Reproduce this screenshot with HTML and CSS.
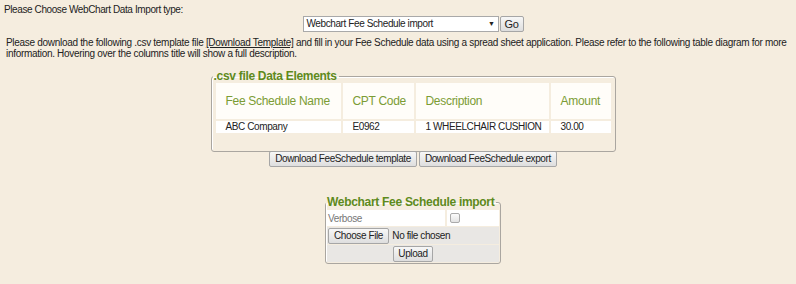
FILE: index.html
```
<!DOCTYPE html>
<html>
	<head>
		<link rel="stylesheet" href="styles.css">
	</head>
	<body>
		<div class="prompt">Please Choose WebChart Data Import type:</div>
		<div class="center">
			<form class="chooser">
				<div class="select">
					<span>Webchart Fee Schedule import</span>
					<span class="arrow">&#9660;</span>
				</div>
				<button class="btn go" type="button">Go</button>
			</form>
		</div>
		<p class="info">
			<span>Please download the following .csv template file</span> <a href="#">[Download Template]</a> <span>and fill in your Fee Schedule data using a spread sheet application. Please refer to the following table diagram for more</span><br>
			<span>information. Hovering over the columns title will show a full description.</span>
		</p>
		<div class="center">
			<fieldset class="elements">
				<legend>.csv file Data Elements</legend>
				<table class="diagram">
					<tr>
						<th class="c1">Fee Schedule Name</th>
						<th class="c2">CPT Code</th>
						<th class="c3">Description</th>
						<th class="c4">Amount</th>
					</tr>
					<tr>
						<td>ABC Company</td>
						<td>E0962</td>
						<td>1 WHEELCHAIR CUSHION</td>
						<td>30.00</td>
					</tr>
				</table>
			</fieldset>
			<div class="downloads">
				<button class="btn" type="button">Download FeeSchedule template</button>
				<button class="btn" type="button">Download FeeSchedule export</button>
			</div>
			<fieldset class="import">
				<legend>Webchart Fee Schedule import</legend>
				<table class="upload">
					<tr class="plain">
						<td class="label">Verbose</td>
						<td class="check"><span class="box"></span></td>
					</tr>
					<tr class="grey">
						<td colspan="2" class="file">
							<button class="btn" type="button">Choose File</button>
							<span>No file chosen</span>
						</td>
					</tr>
					<tr class="grey">
						<td colspan="2" class="send">
							<button class="btn" type="button">Upload</button>
						</td>
					</tr>
				</table>
			</fieldset>
		</div>
	</body>
</html>
```
FILE: styles.css
```
body {
	margin: 0;
	padding: 4px 4px 0;
	background: #f5eddf;
	font-family: "Liberation Sans", Arial, sans-serif;
	font-size: 10px;
	letter-spacing: -0.4px;
	color: #222;
}
.prompt {
	line-height: 12px;
}
.center {
	display: flex;
	flex-direction: column;
	align-items: center;
	padding-left: 30px;
}
.chooser {
	display: flex;
	gap: 1px;
	margin: 0;
}
.select {
	width: 188px;
	height: 14px;
	padding: 0 3px;
	border: 1px solid #a9a9a9;
	background: white;
	display: flex;
	justify-content: space-between;
	align-items: center;
	line-height: 14px;
}
.arrow {
	font-size: 7px;
	color: #222;
}
.btn {
	font-family: inherit;
	font-size: 10px;
	letter-spacing: -0.4px;
	color: #222;
	height: 16px;
	padding: 0 5px;
	border: 1px solid #a6a6a6;
	border-radius: 2px;
	background: linear-gradient(#f7f7f7, #dedede);
	line-height: 14px;
}
.go {
	width: 24px;
	padding: 0;
	font-size: 11px;
}
.info {
	margin: 5px 0 0 2px;
	line-height: 11px;
	letter-spacing: -0.3px;
	white-space: nowrap;
}
.info a {
	color: #222;
}
.elements {
	margin: 12px 0 0;
	padding: 0 2px 16px;
	border: 1px solid #aaa6a0;
	border-radius: 3px;
	box-shadow: inset 1px 1px 0 #fff;
}
legend {
	padding: 0 2px 0 1px;
	margin-left: -1px;
	font-size: 12px;
	letter-spacing: -0.3px;
	font-weight: bold;
	color: #5e8a1c;
	line-height: 10px;
}
.diagram {
	border-spacing: 2px;
	table-layout: fixed;
	width: 399px;
}
.diagram th {
	background: #fffdf9;
	color: #7b9c34;
	font-weight: normal;
	font-size: 12px;
	letter-spacing: -0.3px;
	text-align: left;
	padding: 10px 10px;
	line-height: 16px;
	white-space: nowrap;
}
.diagram td {
	background: #fff;
	padding: 0 10px;
	line-height: 12px;
	white-space: nowrap;
}
.c1 { width: 105px; }
.c2 { width: 51px; }
.c3 { width: 113px; }
.c4 { width: 40px; }
.downloads {
	display: flex;
	gap: 2px;
	margin-top: -1px;
}
.import {
	margin: 30px 0 0;
	padding: 2px 1px 0;
	border: 1px solid #aaa6a0;
	border-radius: 3px;
	box-shadow: inset 1px 1px 0 #fff;
}
.upload {
	border-spacing: 0 1px;
	width: 172px;
}
.upload td {
	padding: 0 1px;
	height: 16px;
}
.plain td {
	background: #fff;
}
.label {
	width: 116px;
	color: #777;
	border-right: 2px solid #f5eddf;
}
.check {
	padding-left: 3px !important;
}
.box {
	display: block;
	width: 8px;
	height: 8px;
	border: 1px solid #aaa;
	border-radius: 2px;
	background: linear-gradient(#fbfbfb, #e3e3e3);
}
.grey td {
	background: #e9e7e4;
	height: 17px;
}
.file .btn {
	margin-right: 1px;
}
.send {
	text-align: center;
}
.send .btn {
	padding: 0 4px;
}
```
